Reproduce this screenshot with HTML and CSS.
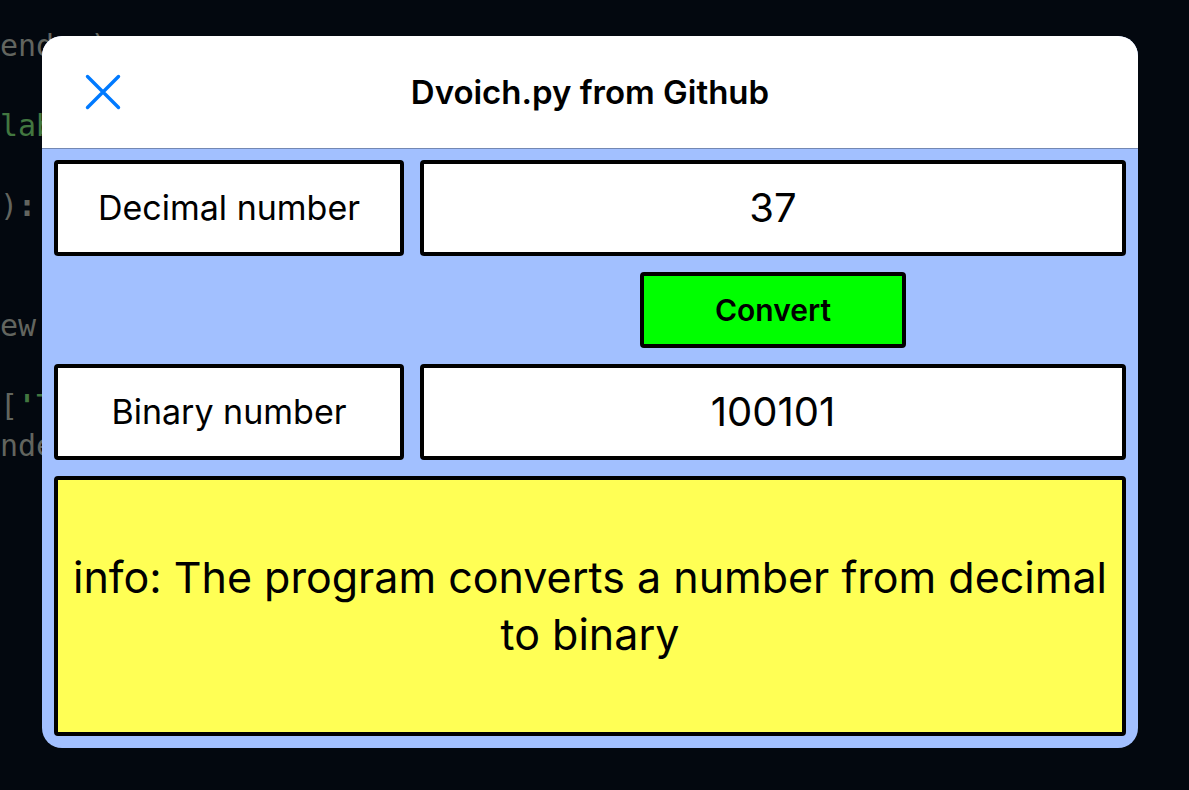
FILE: index.html
```html
<!DOCTYPE html>
<html lang="en">
<head>
<meta charset="utf-8">
<meta name="viewport" content="width=device-width, initial-scale=1">
<title>Dvoich.py from Github</title>
<link rel="stylesheet" href="styles.css">
</head>
<body class="page">
<div class="code" aria-hidden="true">
  <div class="code-line">ender)</div>
  <div class="code-line"></div>
  <div class="code-line"><span class="code-string">lab</span></div>
  <div class="code-line"></div>
  <div class="code-line"><span>)</span><b>:</b></div>
  <div class="code-line"></div>
  <div class="code-line"></div>
  <div class="code-line">ew</div>
  <div class="code-line"></div>
  <div class="code-line"><span>[</span><b class="code-string">'</b><span class="code-string">T</span></div>
  <div class="code-line">nde</div>
</div>
<main class="window">
  <header class="titlebar">
    <button class="close" type="button" aria-label="Close">
      <svg class="close-icon" viewBox="0 0 36 36" aria-hidden="true"><path d="M2.500 2.500L33.500 33.500M33.500 2.500L2.500 33.500"/></svg>
    </button>
    <h1 class="title">Dvoich.py from Github</h1>
  </header>
  <form class="form">
    <label class="box label" for="decimal">Decimal number</label>
    <input class="box value" id="decimal" type="text" value="37">
    <button class="box convert" type="button">Convert</button>
    <label class="box label" for="binary">Binary number</label>
    <input class="box value" id="binary" type="text" value="100101" readonly>
    <p class="box info">info: The program converts a number from decimal to binary</p>
  </form>
</main>
</body>
</html>
```

FILE: styles.css
```css
*, *::before, *::after {
  box-sizing: border-box;
}

.page {
  margin: 0;
  min-height: 100vh;
  padding: 36px 51px 42px 42px;
  display: flex;
  background: #03080f;
  color: #000;
  font-family: Inter, "Liberation Sans", sans-serif;
}

/* Editor text lying behind the window */
.code {
  position: absolute;
  top: 26px;
  left: 0;
  font: 30px/40px "DejaVu Sans Mono", monospace;
  color: #62655f;
}

.code-line {
  display: flex;
  height: 40px;
}

.code-string {
  color: #427740;
}

.window {
  position: relative;
  flex: 1;
  min-width: 0;
  display: flex;
  flex-direction: column;
  border-radius: 20px;
  overflow: hidden;
  background: #a2c0ff;
}

.titlebar {
  display: grid;
  grid-template-columns: 36px 1fr 36px;
  align-items: center;
  padding: 35px 43px;
  border-bottom: 1px solid #7388b3;
  background: #fff;
}

.close {
  display: flex;
  padding: 0;
  border: 0;
  background: none;
  cursor: pointer;
}

.close-icon {
  width: 36px;
  height: 36px;
  fill: none;
  stroke: #007aff;
  stroke-width: 3.4;
  stroke-linecap: round;
}

.title {
  margin: 0;
  text-align: center;
  font-size: 33px;
  font-weight: 600;
  line-height: 42px;
}

.form {
  flex: 1;
  display: grid;
  grid-template-columns: 350px minmax(0, 1fr);
  grid-template-rows: auto auto auto 1fr;
  gap: 16px;
  padding: 11px 12px 12px;
}

.box {
  margin: 0;
  border: 4px solid #000;
  border-radius: 4px;
  background: #fff;
  color: #000;
  font-family: inherit;
  text-align: center;
}

.label {
  padding: 22px 0;
  font-size: 34px;
  line-height: 44px;
}

.value {
  width: 100%;
  padding: 20px 12px;
  font-size: 40px;
  line-height: 48px;
}

.convert {
  grid-column: 2;
  justify-self: center;
  width: 266px;
  padding: 16px;
  background: #0f0;
  font-size: 30px;
  font-weight: 600;
  line-height: 36px;
  cursor: pointer;
}

.info {
  grid-column: 1 / -1;
  display: flex;
  align-items: center;
  justify-content: center;
  background: #ffff55;
  font-size: 43px;
  line-height: 57px;
}
```
